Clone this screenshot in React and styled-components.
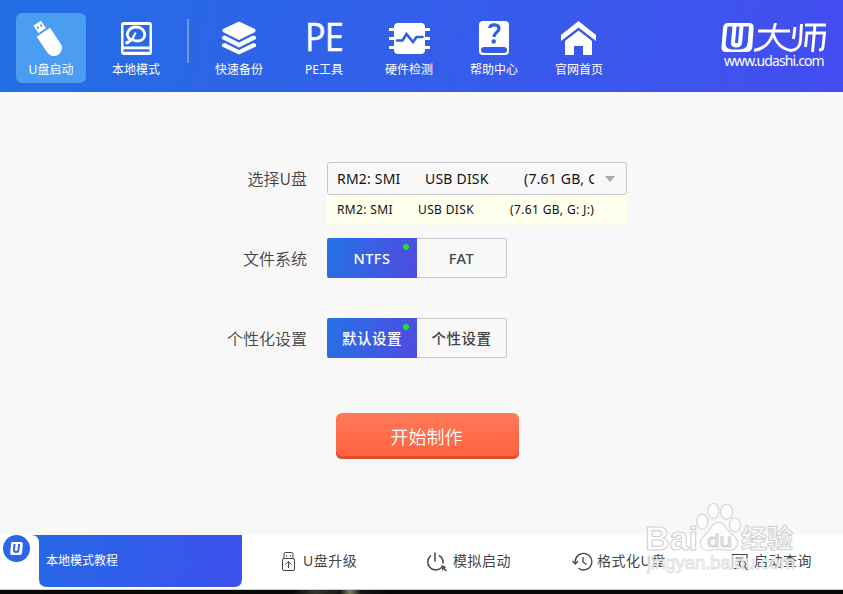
import React from 'react';
import styled, { createGlobalStyle, css } from 'styled-components';


const UsbIcon = () => (
  <svg width="44" height="40" viewBox="0 0 44 40">
    <g transform="translate(18.500 19.500) rotate(-34)" fill="#fff">
      <path d="M-4.5 -18.5h9v9h-9z" />
      <path d="M-8 -7.5h16v19a8 8 0 0 1-16 0z" />
      <path d="M-2.8 -15.5h1.7v2.4h-1.7zM1.2 -15.5h1.7v2.4h-1.7z" fill="#4a9df0" />
    </g>
  </svg>
);

const DiskIcon = () => (
  <svg width="44" height="40" viewBox="0 0 44 40">
    <rect x="7" y="3" width="31" height="33" rx="3" fill="#fff" />
    <path d="M9.500 6h26v21.500h-26zM9.500 30.300h26v2.400h-26z" fill="#2869e4" />
    <path d="M16.500 20.500c-6.500-4.500-2-12.500 6-12.500 10 0 11.500 14 1 14-2 0-3.500-.5-4.500-1.200" fill="none" stroke="#fff" strokeWidth="2.800" />
    <path d="M11.500 22.500l5-2 4.500-7.500 1.500 1-3.500 7.500-5.500 4-2-.5z" fill="#fff" />
  </svg>
);

const LayersIcon = () => (
  <svg width="44" height="40" viewBox="0 0 44 40" fill="#fff">
    <path d="M22 3l16 7.500v2L22 20.500 6 12.500v-2z" stroke="#fff" strokeLinejoin="round" />
    <path d="M5 17.500l3-1L22 23.500l14-7 3 1v2.500L22 28.500 5 20z" />
    <path d="M5 25l3-1L22 31l14-7 3 1v2.500L22 35.500 5 27.500z" />
  </svg>
);

const ChipIcon = () => (
  <svg width="44" height="40" viewBox="0 0 44 40">
    <path d="M2 10.500h41M2 19.500h41M2 28.500h41" stroke="#fff" strokeWidth="3" />
    <rect x="7" y="4" width="31" height="31" rx="4" fill="#fff" />
    <path d="M10 21.500h5.500l4-6.500 6.500 8 3.500-5h6" fill="none" stroke="#315fe8" strokeWidth="2.600" strokeLinecap="round" />
  </svg>
);

const HelpIcon = () => (
  <svg width="44" height="40" viewBox="0 0 44 40">
    <rect x="7" y="2" width="30" height="34" rx="4" fill="#fff" />
    <rect x="9" y="28" width="26" height="6" rx="3" fill="#345be9" />
    <path d="M17.500 9c1-4.500 9.500-4 9.500.5 0 4-5 3.500-5 8.500" fill="none" stroke="#345be9" strokeWidth="3.200" />
    <circle cx="21.700" cy="22.500" r="2.200" fill="#345be9" />
  </svg>
);

const HomeIcon = () => (
  <svg width="44" height="40" viewBox="0 0 44 40" fill="#fff">
    <path d="M21.500 2L39 16v6L21.500 8.500 4 22v-6z" />
    <path d="M21.500 11.500L35 22v14h-9v-9h-9v9H8V22z" />
  </svg>
);

const LogoMark = () => (
  <svg width="106" height="33" viewBox="0 0 106 33">
    <path d="M7 1h21q5 0 4.600 5l-1.300 19q-.5 5-6 5H5q-5 0-4.500-5L2 6q.5-5 5-5z" fill="#fff" />
    <path d="M6.500 4.500h5L10 20.500q-.3 5 5.200 5t5.900-5L22.500 4.500h5.500l-1.300 16q-.5 7-9 7h-6q-7.500 0-7-7z" fill="#3c56ed" />
    <path d="M15.500 4.500h3L17 21h-3z" fill="#3c56ed" />
    <g fill="none" stroke="#fff" strokeWidth="2.900">
      <path d="M37 9h32M54.500 1L52 11q-4 15-19 17.500M52 11q4 15 18 17.500 9-1 9.500-10L80.500 2" />
      <path d="M74 5l-1.500 12M84 3h21M94 3L91.500 30M84.500 25l1.500-14h17.500l-1.500 14q-.3 3-4 3" />
    </g>
  </svg>
);

const BadgeMark = () => (
  <svg width="15" height="15" viewBox="0 0 15 15">
    <path d="M3 1h9q2 0 1.800 2l-.8 9q-.2 2-2 2H3q-2 0-1.800-2L2 3q.2-2 1-2z" fill="#fff" />
    <path d="M5.500 3L5 9q0 2 2.200 2T9.500 9L10 3" fill="none" stroke="#2c65e5" strokeWidth="2" />
  </svg>
);

const UpgradeIcon = () => (
  <svg width="15" height="20" viewBox="0 0 15 20" fill="none" stroke="#444">
    <path d="M3 6.500V2q0-1.500 1.500-1.500h6Q12 .5 12 2v4.500" />
    <rect x="1.500" y="6.500" width="12" height="12" rx="1.500" />
    <path d="M5.500 3v1.500M9.500 3v1.500M7.500 16v-6.500M4.500 12.500l3-3 3 3" />
  </svg>
);

const PowerIcon = () => (
  <svg width="22" height="20" viewBox="0 0 22 20" fill="none" stroke="#444" strokeWidth="1.500">
    <path d="M5 3.500a8 8 0 1 0 10.500 12M13 3.500a8 8 0 0 1 4 8M9 .5v9" />
    <path d="M15 13l5.500 2-2 1 2.500 2.500-1 1-2.500-2.500-1 2z" fill="#444" stroke="none" />
  </svg>
);

const HistoryIcon = () => (
  <svg width="21" height="20" viewBox="0 0 21 20" fill="none" stroke="#444" strokeWidth="1.300">
    <path d="M3.200 11.500V9.500a8.300 8.300 0 1 1 3.300 6.800" />
    <path d="M.5 9l2.800 3L6 9M11 5v5l3.500 2.500" />
  </svg>
);

const QueryIcon = () => (
  <svg width="18" height="18" viewBox="0 0 18 18" fill="none" stroke="#444" strokeWidth="1.200">
    <path d="M8 15.500H1.500v-14h14.500v15M4.500 5h8.500M4.500 8.500h4M4.500 12h3" />
    <circle cx="11.500" cy="11" r="3" />
    <path d="M13.500 13.500l3 3.500" />
  </svg>
);

const mainNav = [
  { label: 'U盘启动', icon: <UsbIcon />, active: true },
  { label: '本地模式', icon: <DiskIcon /> }
];

const toolNav = [
  { label: '快速备份', icon: <LayersIcon /> },
  { label: 'PE工具', text: 'PE' },
  { label: '硬件检测', icon: <ChipIcon /> },
  { label: '帮助中心', icon: <HelpIcon /> },
  { label: '官网首页', icon: <HomeIcon /> }
];

const footerLinks = [
  { label: 'U盘升级', icon: <UpgradeIcon />, start: 39, gap: 7 },
  { label: '模拟启动', icon: <PowerIcon />, start: 184, gap: 5 },
  { label: '格式化U盘', icon: <HistoryIcon />, start: 330, gap: 4 },
  { label: '启动查询', icon: <QueryIcon />, start: 489, gap: 5 }
];

const NavItem = ({ item }) => (
  <NavButton $active={item.active}>
    <NavIcon>{item.icon || <PeText>{item.text}</PeText>}</NavIcon>
    <NavLabel>{item.label}</NavLabel>
  </NavButton>
);

const Choice = ({ label, options }) => (
  <Field>
    <Label>{label}</Label>
    <Segment>
      {options.map((option, index) => (
        <SegmentBtn key={option} $selected={index === 0}>{option}</SegmentBtn>
      ))}
    </Segment>
  </Field>
);

const Watermark = () => (
  <WatermarkSvg width="160" height="82" viewBox="0 0 160 82">
    <g fill="#fff" fillOpacity=".75" stroke="#d6d6d6" strokeWidth="1.200">
      <ellipse cx="59.300" cy="25.700" rx="5.500" ry="7.500" />
      <ellipse cx="70.300" cy="15" rx="5.500" ry="7.500" />
      <ellipse cx="83.700" cy="15.700" rx="6" ry="7.500" />
      <ellipse cx="92" cy="29" rx="5.500" ry="7" />
      <path d="M75 26.500q6 0 8.500 6 3 4 7 7 5 4 4 9-2 6-8 6-11-2-22 0-6 0-7-6-1-5 4-9 3-3 6-7 3-6 7.500-6z" />
    </g>
    <g fill="#fff" fillOpacity=".75" stroke="#d2d2d2" strokeWidth="1.100" fontFamily='"Liberation Sans", "Noto Sans CJK SC", sans-serif' fontWeight="700">
      <text x="2" y="54" fontSize="34" textLength="53" lengthAdjust="spacingAndGlyphs">Bai</text>
      <text x="64" y="51" fontSize="19" fontWeight="400" textLength="25" lengthAdjust="spacingAndGlyphs">du</text>
      <text x="98" y="52" fontSize="26" textLength="52" lengthAdjust="spacingAndGlyphs">经验</text>
    </g>
    <text x="4" y="73" fontFamily='"Liberation Sans", sans-serif' fontSize="18" fill="#fff" fillOpacity=".6" stroke="#e0e0e0" strokeWidth=".9" textLength="148" lengthAdjust="spacingAndGlyphs">jingyan.baidu.com</text>
  </WatermarkSvg>
);

const App = () => (
  <>
    <GlobalStyle />
    <Window>
      <Header>
        <NavGroup>
          {mainNav.map(item => <NavItem key={item.label} item={item} />)}
        </NavGroup>
        <Divider />
        <NavGroup>
          {toolNav.map(item => <NavItem key={item.label} item={item} />)}
        </NavGroup>
        <Logo>
          <LogoMark />
          <LogoUrl>www.udashi.com</LogoUrl>
        </Logo>
      </Header>

      <Main>
        <DiskField>
          <Label>选择U盘</Label>
          <Picker>
            <Select>
              <SelectValue>
                <span>RM2: SMI</span><span>USB DISK</span><span>(7.61 GB, G: J:)</span>
              </SelectValue>
              <Arrow />
            </Select>
            <Option>
              <span>RM2: SMI</span><span>USB DISK</span><span>(7.61 GB, G: J:)</span>
            </Option>
          </Picker>
        </DiskField>
        <Choice label="文件系统" options={['NTFS', 'FAT']} />
        <Choice label="个性化设置" options={['默认设置', '个性设置']} />
        <StartBtn>开始制作</StartBtn>
      </Main>

      <Footer>
        <Badge><BadgeMark /></Badge>
        <Tutorial>本地模式教程</Tutorial>
        <Links>
          {footerLinks.map(({ label, icon, start, gap }) => (
            <FooterLink key={label} $start={start} $gap={gap}>{icon}<span>{label}</span></FooterLink>
          ))}
        </Links>
      </Footer>
      <Desktop />
      <Watermark />
    </Window>
  </>
);

export default App;


const GlobalStyle = createGlobalStyle`
  body {
    margin: 0;
    overflow: hidden;
  }

  * {
    box-sizing: border-box;
  }

  button {
    border: none;
    padding: 0;
    margin: 0;
    background: none;
    font: inherit;
    color: inherit;
  }

  svg {
    display: block;
    flex: none;
  }
`;

const Window = styled.div`
  position: relative;
  display: flex;
  flex-direction: column;
  width: 843px;
  height: 594px;
  background: #f8f8f8;
  color: #444;
  font-family: "Noto Sans", "Noto Sans CJK SC", sans-serif;
`;

const Header = styled.header`
  display: flex;
  height: 92px;
  padding: 13px 16px 0;
  background: linear-gradient(100deg, #226fe4 0%, #2f62e8 38%, #3d55ee 78%, #434df0 100%);
  color: #fff;
`;

const NavGroup = styled.nav`
  display: flex;
  gap: 15px;
`;

const NavButton = styled.button`
  display: flex;
  flex-direction: column;
  align-items: center;
  width: 70px;
  height: 70px;
  padding-top: 6px;
  border-radius: 6px;
  white-space: nowrap;
  background: ${({ $active }) => $active ? '#4a9df0' : 'transparent'};
`;

const NavIcon = styled.div`
  height: 40px;
`;

const PeText = styled.div`
  font-family: "Open Sans", sans-serif;
  font-size: 38px;
  line-height: 35px;
  letter-spacing: -1px;
  transform: scaleX(0.9);
  -webkit-text-stroke: 0.5px #fff;
`;

const NavLabel = styled.div`
  font-size: 12px;
  line-height: 18px;
  margin-top: 2px;
`;

const Divider = styled.div`
  width: 2px;
  height: 44px;
  margin: 6px 15px 0 16px;
  background: #6b9ad5;
`;

const Logo = styled.div`
  width: 106px;
  margin: 9px 0 0 auto;
`;

const LogoUrl = styled.div`
  margin: -1px 0 0 3px;
  font-size: 14px;
  line-height: 14px;
  letter-spacing: -0.9px;
  white-space: nowrap;
`;

const Main = styled.main`
  height: 443px;
  padding: 70px 0 0 207px;
`;

const Field = styled.div`
  display: flex;
  height: 80px;
`;

const Label = styled.div`
  width: 100px;
  margin-right: 20px;
  padding-top: 8px;
  font-family: "Noto Sans CJK SC", sans-serif;
  font-size: 16px;
  font-weight: 350;
  line-height: 24px;
  text-align: right;
`;

const DiskField = styled(Field)`
  height: 76px;

  ${Label} {
    padding-top: 4px;
  }
`;

const Picker = styled.div`
  width: 300px;
`;

const Select = styled.div`
  display: flex;
  align-items: center;
  height: 33px;
  padding-left: 9px;
  border: 1px solid #c8c8c8;
  border-radius: 3px;
`;

const columns = css`
  display: grid;
  color: #111;
  white-space: nowrap;
`;

const SelectValue = styled.div`
  ${columns}
  grid-template-columns: 88px 99px 70px;
  width: 257px;
  overflow: hidden;
  font-size: 14px;
  letter-spacing: 0.2px;
`;

const Arrow = styled.div`
  margin-left: 11px;
  border: 5px solid transparent;
  border-top: 6px solid #aaa;
  border-bottom: 0;
`;

const Option = styled.div`
  ${columns}
  grid-template-columns: 81px 92px 90px;
  height: 30px;
  padding-left: 10px;
  background: #ffffed;
  font-size: 12px;
  line-height: 30px;
  letter-spacing: 0.36px;
`;

const Segment = styled.div`
  display: flex;
`;

const SegmentBtn = styled.button`
  width: 90px;
  height: 40px;
  border: 1px solid #c8c8c8;
  border-left: none;
  border-radius: 0 2px 2px 0;
  font-size: 14.500px;
  font-weight: 500;
  line-height: 20px;
  letter-spacing: 0.5px;

  ${({ $selected }) => $selected && css`
    border: none;
    border-radius: 2px 0 0 2px;
    color: #fff;
    background:
      radial-gradient(circle at 79px 9px, #1ee030 2.7px, transparent 3.3px),
      linear-gradient(105deg, #2572e6, #504bdf);
  `}
`;

const StartBtn = styled.button`
  display: block;
  width: 183px;
  height: 46px;
  margin: 15px 0 0 129px;
  padding: 0 2px 1px 0;
  border-radius: 6px;
  background: linear-gradient(#ff7959, #ff623e);
  box-shadow: inset 0 -3px #df4e2b;
  color: #fff;
  font-size: 18px;
  font-weight: 350;
`;

const Footer = styled.footer`
  display: flex;
  height: 55px;
  background: #fff;
  border-bottom: 1px solid #ccc;
`;

const Badge = styled.div`
  display: grid;
  place-items: center;
  width: 27px;
  height: 27px;
  margin: 0 1px 0 3px;
  border-radius: 50%;
  background: #2c65e5;
`;

/* the clip rounds the bottom corners and flares the top left one outwards */
const Tutorial = styled.div`
  width: 211px;
  height: 52px;
  padding-left: 15px;
  background: linear-gradient(100deg, #2569e7, #3e50ed);
  clip-path: path('M0 0H211V44Q211 52 203 52H16Q8 52 8 44V8Q8 0 0 0Z');
  color: #fff;
  font-size: 12px;
  line-height: 52px;
`;

const Links = styled.nav`
  display: grid;
  flex: 1;
`;

const FooterLink = styled.button`
  display: flex;
  align-items: center;
  grid-area: 1 / 1;
  justify-self: start;
  height: 53px;
  margin-left: ${({ $start }) => $start}px;
  gap: ${({ $gap }) => $gap}px;
  font-size: 14px;
  letter-spacing: 0.5px;
  white-space: nowrap;

  span {
    padding-bottom: 3px;
  }
`;

const Desktop = styled.div`
  height: 4px;
  background: linear-gradient(90deg, #080808 292px, #35352c 315px, #171715 340px, #7b8060 350px, #151515 361px, #080808 390px);
`;

const WatermarkSvg = styled.svg`
  position: absolute;
  left: 643px;
  top: 496px;
  pointer-events: none;
`;
